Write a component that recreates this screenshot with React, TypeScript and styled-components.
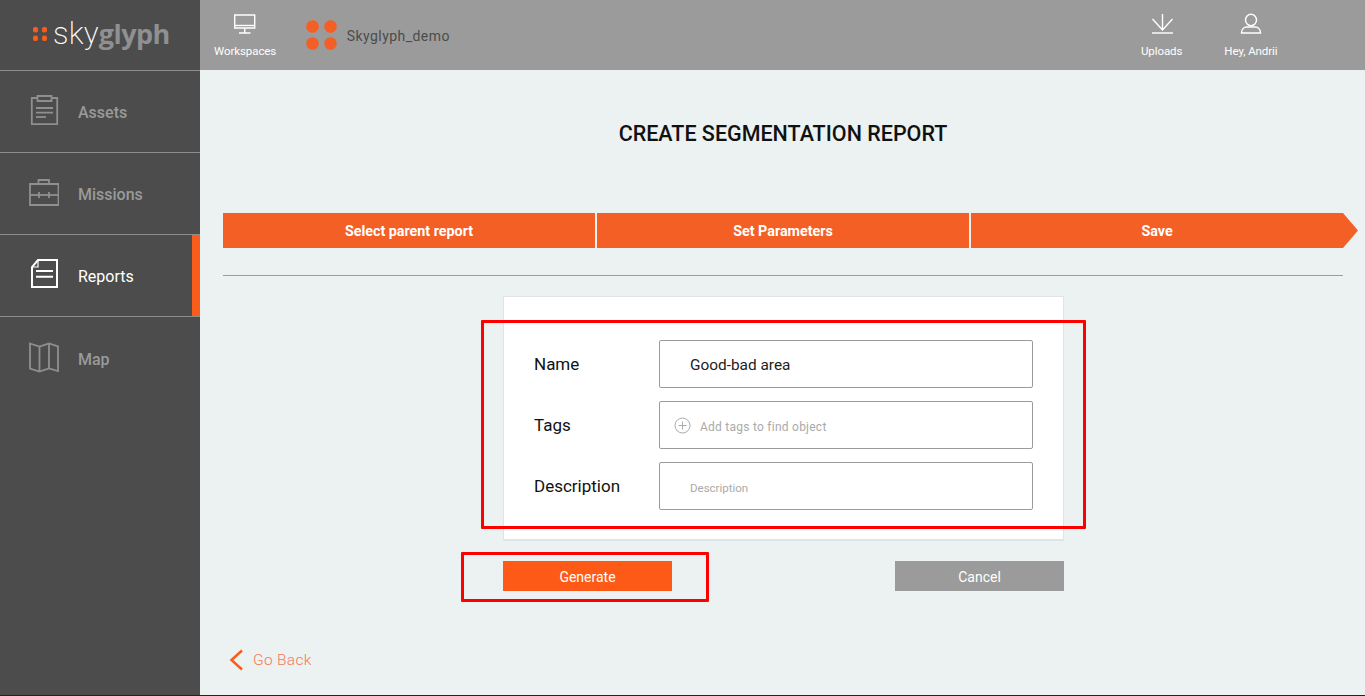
import React from "react";
import styled, { createGlobalStyle } from "styled-components";

const Global = createGlobalStyle`
  html, body { margin: 0; padding: 0; height: 100%; overflow: hidden; }
  body { font-family: Roboto, "Noto Sans", sans-serif; }
  * { box-sizing: border-box; }
`;
const Page = styled.div`
  display: flex; width: 1365px; height: 696px; position: relative; overflow: hidden; border-bottom: 1px solid #222;
`;
const Sidebar = styled.aside`
  width: 200px; flex: none; background: #4c4c4c; display: flex; flex-direction: column;
`;
const LogoBox = styled.div`
  height: 71px; flex: none; display: flex; align-items: center; padding: 0 0 2px 33px; gap: 6px;
  border-bottom: 1px solid #8c8c8c;
`;
const LogoDots = styled.svg` width: 14px; height: 14px; flex: none; `;
const LogoText = styled.div`
  font-family: Roboto, sans-serif; font-size: 31px; line-height: 36px; color: #fff; font-weight: 200; letter-spacing: 0.2px;
  b { font-family: "Open Sans", sans-serif; color: #8f9091; font-weight: 700; letter-spacing: -0.55px; font-size: 27px; }
`;
const NavItem = styled.div<{ $active?: boolean }>`
  height: 82px; flex: none; display: flex; align-items: center; gap: 19px; padding-left: 29px; position: relative;
  border-bottom: 1px solid #8c8c8c;
  color: ${p => (p.$active ? "#fff" : "#9a9a9a")};
  font-size: 16px; font-weight: ${p => (p.$active ? 400 : 500)};
  ${p => (p.$active ? "box-shadow: inset -8px 0 0 #f95c1b;" : "")}
  svg { width: 30px; height: 32px; flex: none; margin-bottom: 1px; }
`;
const NavLast = styled(NavItem)` border-bottom: none; `;
const NavLabel = styled.span` padding-top: 2px; `;
const Right = styled.div`
  flex: 1; display: flex; flex-direction: column; min-width: 0;
`;
const Topbar = styled.header`
  height: 70px; flex: none; background: #9b9b9b; display: flex; align-items: flex-start; padding-left: 14px;
`;
const TopAction = styled.div`
  display: flex; flex-direction: column; align-items: center; color: #fff; font-size: 11.5px; line-height: 14px; padding-top: 13px; letter-spacing: -0.08px;
  svg { width: 24px; height: 24px; display: block; margin-bottom: 7px; }
`;
const Workspace = styled.div`
  display: flex; align-items: center; gap: 10px; margin-left: 29.500px; height: 70px;
  color: #4c4c4c; font-size: 14px; letter-spacing: 0.45px;
  svg { width: 31px; height: 30px; flex: none; }
`;
const WorkspaceName = styled.span` padding-top: 2px; `;
const TopSpacer = styled.div` flex: 1; `;
const TopRight = styled.div` display: flex; gap: 42px; padding-right: 87.500px; `;
const Main = styled.main`
  flex: 1; background: #ecf1f1; padding: 52px 0 0 23px; display: flex; flex-direction: column; position: relative;
`;
const Title = styled.h1`
  margin: 0; width: 1120px; text-align: center; font-size: 21.5px; line-height: 24px; font-weight: 500; color: #111;
`;
const Steps = styled.div`
  margin-top: 67px; display: flex; width: 1135px; height: 35px; gap: 2px;
`;
const Step = styled.div<{ $arrow?: boolean; $w: number }>`
  width: ${p => p.$w}px; flex: none; background: #f45f25; color: #fff; font-size: 14.3px; font-weight: 700;
  display: flex; align-items: center; justify-content: center; padding-top: 1px;
  ${p => (p.$arrow ? "clip-path: polygon(0 0, calc(100% - 15px) 0, 100% 50%, calc(100% - 15px) 100%, 0 100%); padding-right: 15px;" : "")}
`;
const Divider = styled.div`
  margin-top: 27px; width: 1120px; height: 1px; background: #9b9d9e; flex: none;
`;
const Card = styled.section`
  margin: 20px 0 0 280px; width: 561px; height: 245px; background: #fff; border: 1px solid #e0e4e4; border-bottom-width: 2px;
  padding: 43px 30px 0 30px; display: flex; flex-direction: column; gap: 13px;
`;
const Row = styled.div`
  display: flex; align-items: center; height: 48px;
`;
const Label = styled.div`
  width: 125px; flex: none; font-size: 17px; color: #111;
`;
const Field = styled.div`
  width: 374px; height: 48px; border: 1px solid #9b9b9b; border-radius: 2px; display: flex; align-items: center; padding: 1px 0 0 30px;
  font-size: 15.4px; color: #222;
`;
const TagField = styled(Field)`
  padding: 0 0 0 14px; gap: 9px; font-size: 12px; color: #aaa; letter-spacing: 0.25px;
  svg { width: 17px; height: 17px; flex: none; }
`;
const TagHint = styled.span` padding-top: 4px; `;
const PlaceholderField = styled(Field)` font-size: 11.5px; color: #aaa; padding-top: 3px; `;
const Buttons = styled.div`
  margin: 20px 0 0 280px; width: 561px; display: flex; justify-content: space-between;
`;
const Button = styled.div<{ $c: string }>`
  width: 169px; height: 30px; display: flex; align-items: center; justify-content: center; padding-top: 2px;
  background: ${p => p.$c}; color: #fff; font-size: 14px;
`;
const Back = styled.div`
  position: absolute; left: 30px; top: 579px; display: flex; align-items: center; gap: 10px; color: #f9785a; font-size: 15.5px; letter-spacing: 0.3px; font-weight: 300;
  svg { width: 14px; height: 22px; flex: none; margin-left: -1px; }
`;
const Annot = styled.div<{ $l: number; $t: number; $w: number; $h: number }>`
  position: absolute; left: ${p => p.$l}px; top: ${p => p.$t}px; width: ${p => p.$w}px; height: ${p => p.$h}px;
  border: 3px solid #fe0000; border-radius: 1px; pointer-events: none;
`;

export default function App() {
  return (
    <Page>
      <Global />
      <Sidebar>
        <LogoBox>
          <LogoDots viewBox="0 0 14 14">
            <g fill="#f95c1b">
              <rect x="0" y="0" width="5" height="5.5" rx="2" />
              <rect x="9" y="0" width="5" height="5.5" rx="2" />
              <rect x="0" y="8.500" width="5" height="5.5" rx="2" />
              <rect x="9" y="8.500" width="5" height="5.5" rx="2" />
            </g>
          </LogoDots>
          <LogoText>sky<b>glyph</b></LogoText>
        </LogoBox>
        <NavItem>
          <svg viewBox="0 0 30 32" fill="none" stroke="#8f8f8f" strokeWidth="1.8">
            <path d="M8.500 3H2.800V29.200H28.200V3H22.500" />
            <path d="M8.500 1h14v5h-14z" />
            <path d="M7 13h17M7 17.700h17" />
            <path d="M7 22h10" />
          </svg>
          <NavLabel>Assets</NavLabel>
        </NavItem>
        <NavItem>
          <svg viewBox="0 0 30 32" fill="none" stroke="#8f8f8f" strokeWidth="1.8">
            <path d="M1 7h28.500v21H1z" />
            <path d="M9.500 7V3h10.500v4" />
            <path d="M1 18h28.500" />
            <path d="M10 15v6M20 15v6" />
          </svg>
          <NavLabel>Missions</NavLabel>
        </NavItem>
        <NavItem $active>
          <svg viewBox="0 0 30 32" fill="none" stroke="#fff" strokeWidth="2">
            <path d="M9 1h19v27H3V8z" />
            <path d="M3.500 8H9V2" strokeWidth="1.200" />
            <path d="M7 12h17M7 17.700h17" />
          </svg>
          <NavLabel>Reports</NavLabel>
        </NavItem>
        <NavLast>
          <svg viewBox="0 0 30 32" fill="none" stroke="#8f8f8f" strokeWidth="1.8">
            <path d="M1 1.500l9.500 3L20 1.500l9 3V29l-9-2.500-9.500 3L1 26.500z" />
            <path d="M10.500 4.500v25M20 1.500v25" />
          </svg>
          <NavLabel>Map</NavLabel>
        </NavLast>
      </Sidebar>
      <Right>
        <Topbar>
          <TopAction>
            <svg viewBox="0 0 24 24" fill="none" stroke="#fff" strokeWidth="1.400">
              <path d="M1.700 2h20v13h-20z" />
              <path d="M1.700 12.500h20" />
              <path d="M11.700 15v5M6 20h11.500" />
            </svg>
            Workspaces
          </TopAction>
          <Workspace>
            <svg viewBox="0 0 31 30" fill="#f45f25">
              <circle cx="6.500" cy="6.500" r="6.300" />
              <circle cx="24.500" cy="6.500" r="6.300" />
              <circle cx="6.500" cy="23.500" r="6.300" />
              <circle cx="24.500" cy="23.500" r="6.300" />
            </svg>
            <WorkspaceName>Skyglyph_demo</WorkspaceName>
          </Workspace>
          <TopSpacer />
          <TopRight>
            <TopAction>
              <svg viewBox="0 0 24 24" fill="none" stroke="#fff" strokeWidth="1.400">
                <path d="M12.500 1v16" />
                <path d="M2.500 6l10 11 10-11" />
                <path d="M2 20h21" />
              </svg>
              Uploads
            </TopAction>
            <TopAction>
              <svg viewBox="0 0 24 24" fill="none" stroke="#fff" strokeWidth="1.400">
                <ellipse cx="12" cy="7" rx="5.500" ry="5.800" />
                <path d="M2.500 19.500c0-3 2.500-5.500 5-5.500h9c2.500 0 5 2.500 5 5.500v.5H2.500z" />
              </svg>
              Hey, Andrii
            </TopAction>
          </TopRight>
        </Topbar>
        <Main>
          <Title>CREATE SEGMENTATION REPORT</Title>
          <Steps>
            <Step $w={372}>Select parent report</Step>
            <Step $w={372}>Set Parameters</Step>
            <Step $w={387} $arrow>Save</Step>
          </Steps>
          <Divider />
          <Card>
            <Row><Label>Name</Label><Field>Good-bad area</Field></Row>
            <Row>
              <Label>Tags</Label>
              <TagField>
                <svg viewBox="0 0 17 17" fill="none" stroke="#aaa" strokeWidth="1">
                  <circle cx="8.500" cy="8.500" r="7.500" />
                  <path d="M8.500 4.500v8M4.500 8.500h8" />
                </svg>
                <TagHint>Add tags to find object</TagHint>
              </TagField>
            </Row>
            <Row><Label>Description</Label><PlaceholderField>Description</PlaceholderField></Row>
          </Card>
          <Buttons>
            <Button $c="#fe5a17">Generate</Button>
            <Button $c="#9b9b9b">Cancel</Button>
          </Buttons>
          <Back>
            <svg viewBox="0 0 14 22" fill="none" stroke="#f95c1b" strokeWidth="2.500">
              <path d="M13 1.500L2.500 11 13 20.500" />
            </svg>
            Go Back
          </Back>
        </Main>
      </Right>
      <Annot $l={481} $t={320} $w={605} $h={209} />
      <Annot $l={461} $t={552} $w={248} $h={50} />
    </Page>
  );
}
